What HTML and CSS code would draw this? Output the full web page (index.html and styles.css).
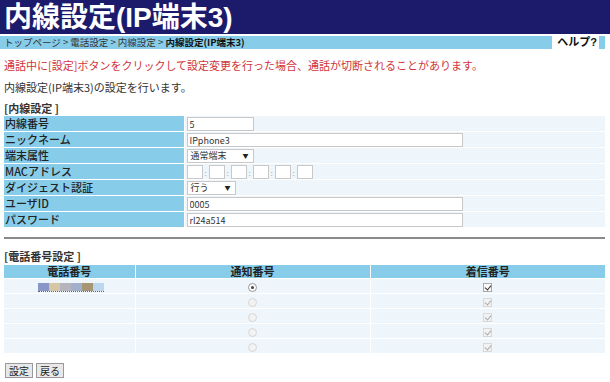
FILE: index.html
```html
<!DOCTYPE html>
<html lang="ja">
<head>
    <meta charset="UTF-8">
    <title>内線設定(IP端末3)</title>
    <link rel="stylesheet" href="styles.css">
</head>
<body>
    <div class="title-bar">
        <h1>内線設定(IP端末3)</h1>
    </div>
    <div class="crumb-bar">
        <div class="crumbs">トップページ &gt; 電話設定 &gt; 内線設定 &gt; <b>内線設定(IP端末3)</b></div>
        <div class="help">ヘルプ?</div>
    </div>

    <div class="main">
        <p class="warn">通話中に[設定]ボタンをクリックして設定変更を行った場合、通話が切断されることがあります。</p>
        <p class="desc">内線設定(IP端末3)の設定を行います。</p>

        <div class="section-title">[内線設定 ]</div>
        <table class="form-table">
            <tr>
                <th>内線番号</th>
                <td><input type="text" class="short" value="5"></td>
            </tr>
            <tr>
                <th>ニックネーム</th>
                <td><input type="text" class="long" value="IPphone3"></td>
            </tr>
            <tr>
                <th>端末属性</th>
                <td><span class="select s-wide">通常端末</span></td>
            </tr>
            <tr>
                <th>MACアドレス</th>
                <td class="mac">
                    <input type="text" class="oct"><span class="colon">:</span><input type="text" class="oct"><span class="colon">:</span><input type="text" class="oct"><span class="colon">:</span><input type="text" class="oct"><span class="colon">:</span><input type="text" class="oct"><span class="colon">:</span><input type="text" class="oct">
                </td>
            </tr>
            <tr>
                <th>ダイジェスト認証</th>
                <td><span class="select s-narrow">行う</span></td>
            </tr>
            <tr>
                <th>ユーザID</th>
                <td><input type="text" class="long" value="0005"></td>
            </tr>
            <tr>
                <th>パスワード</th>
                <td><input type="text" class="long" value="rl24a514"></td>
            </tr>
        </table>

        <hr>

        <div class="section-title">[電話番号設定 ]</div>
        <table class="num-table">
            <tr>
                <th class="c1">電話番号</th>
                <th class="c2">通知番号</th>
                <th class="c3">着信番号</th>
            </tr>
            <tr>
                <td>
                    <span class="mosaic">
                        <i class="m1"></i><i class="m2"></i><i class="m3"></i><i class="m4"></i><i class="m5"></i><i class="m6"></i>
                    </span>
                </td>
                <td><span class="radio on"></span></td>
                <td><span class="check"></span></td>
            </tr>
            <tr>
                <td></td>
                <td><span class="radio off"></span></td>
                <td><span class="check off"></span></td>
            </tr>
            <tr>
                <td></td>
                <td><span class="radio off"></span></td>
                <td><span class="check off"></span></td>
            </tr>
            <tr>
                <td></td>
                <td><span class="radio off"></span></td>
                <td><span class="check off"></span></td>
            </tr>
            <tr>
                <td></td>
                <td><span class="radio off"></span></td>
                <td><span class="check off"></span></td>
            </tr>
        </table>

        <div class="buttons">
            <button>設定</button>
            <button>戻る</button>
        </div>
    </div>
</body>
</html>
```

FILE: styles.css
```css
:root {
    --navy: #1b1a6b;
    --sky: #87cdea;
    --pale: #eef6fc;
}

* {
    box-sizing: border-box;
    margin: 0;
    padding: 0;
}

body {
    font-family: "Noto Sans CJK JP", "DejaVu Sans", sans-serif;
    font-size: 11px;
    line-height: 14px;
    color: #333;
    background: #fff;
}

.title-bar {
    background: var(--navy);
    height: 35px;
    padding: 4px 0 0 4px;
    border-bottom: 1px solid #fff;
}

.title-bar h1 {
    color: #fff;
    font-family: "Liberation Sans", "Noto Sans CJK JP", sans-serif;
    font-size: 28px;
    line-height: 28px;
    font-weight: bold;
}

.crumb-bar {
    display: flex;
    align-items: stretch;
    height: 13px;
    width: 605px;
    background: var(--sky);
    margin-top: 1px;
}

.crumbs {
    flex: 1;
    font-size: 9.5px;
    line-height: 13px;
    padding-left: 4px;
    color: #333;
}

.crumbs b {
    color: #111;
}

.help {
    background: #fff;
    width: 47px;
    margin-right: 6px;
    font-family: "Liberation Sans", "Noto Sans CJK JP", sans-serif;
    font-size: 11px;
    font-weight: bold;
    line-height: 13px;
    text-align: right;
    padding-right: 2px;
    color: #111;
}

.main {
    padding: 0 5px 0 4px;
}

.warn {
    color: #d0343a;
    margin-top: 9px;
}

.desc {
    margin-top: 8px;
}

.section-title {
    font-weight: bold;
    color: #333;
    line-height: 13px;
    margin-top: 8px;
}

table {
    width: 601px;
    border-collapse: collapse;
}

.form-table th,
.form-table td {
    height: 15px;
    border: 1px solid #fff;
    border-left: none;
    padding: 0;
    line-height: 13px;
}

.form-table th {
    background: var(--sky);
    width: 180px;
    text-align: left;
    font-weight: 500;
    padding-left: 1px;
    color: #222;
}

.form-table td {
    background: var(--pale);
    padding-left: 2px;
    border-right: none;
}

input[type=text] {
    font-family: inherit;
    font-size: 9px;
    height: 14px;
    border: 1px solid #c8c8c8;
    background: #fff;
    padding: 0 2px;
    color: #333;
    vertical-align: middle;
}

.short {
    width: 67px;
}

.long {
    width: 276px;
}

.select {
    display: inline-block;
    position: relative;
    height: 14px;
    border: 1px solid #c8c8c8;
    background: #fff;
    font-size: 9px;
    line-height: 12px;
    padding-left: 3px;
    vertical-align: middle;
}

.select::after {
    content: "▼";
    position: absolute;
    right: 4px;
    top: 0;
    font-size: 6px;
    color: #222;
}

.s-wide {
    width: 67px;
}

.s-narrow {
    width: 49px;
}

.mac .oct {
    width: 16px;
}

.colon {
    display: inline-block;
    width: 6px;
    text-align: center;
    color: #aaa;
    font-size: 8px;
    vertical-align: middle;
}

hr {
    border: 0;
    border-top: 2px solid #8a8a8a;
    margin-top: 9px;
    width: 601px;
}

.main hr + .section-title {
    margin-top: 11px;
    margin-bottom: 1px;
}

.num-table th,
.num-table td {
    height: 15px;
    border: 1px solid #fff;
    text-align: center;
    padding: 0;
    line-height: 13px;
}

.num-table th:first-child,
.num-table td:first-child {
    border-left: none;
}

.num-table th:last-child,
.num-table td:last-child {
    border-right: none;
}

.num-table th {
    background: var(--sky);
    font-weight: bold;
    height: 14px;
    color: #222;
}

.num-table td {
    background: var(--pale);
}

.c1 {
    width: 131px;
}

.c2 {
    width: 235px;
}

.mosaic {
    display: inline-flex;
    margin-left: 4px;
    border-bottom: 1px dotted #666;
    vertical-align: middle;
}

.mosaic i {
    display: block;
    width: 11px;
    height: 8px;
}

.m1 { background: #8797c8; }
.m2 { background: #d6c6a6; }
.m3 { background: #b4b4bc; }
.m4 { background: #a2b0cc; }
.m5 { background: #a69676; }
.m6 { background: #bcd6ee; }

.radio {
    display: inline-block;
    width: 9px;
    height: 9px;
    border-radius: 50%;
    border: 1px solid #c4c4c4;
    background: #f4f4f4;
    vertical-align: middle;
    position: relative;
}

.radio.on {
    border-color: #999;
    background: #fafafa;
}

.radio.on::after {
    content: "";
    position: absolute;
    left: 2px;
    top: 2px;
    width: 3px;
    height: 3px;
    border-radius: 50%;
    background: #444;
}

.radio.off {
    border-color: #d6d6d6;
    background: #f2f2f2;
}

.check {
    display: inline-block;
    width: 9px;
    height: 9px;
    border: 1px solid #aaa;
    background: #fafafa;
    vertical-align: middle;
    position: relative;
}

.check::after {
    content: "";
    position: absolute;
    left: 2px;
    top: 0;
    width: 3px;
    height: 5px;
    border: solid #333;
    border-width: 0 1.5px 1.5px 0;
    transform: rotate(40deg);
}

.check.off {
    border-color: #d8d8d8;
    background: #f2f2f2;
}

.check.off::after {
    border-color: #aaa;
}

.buttons {
    margin-top: 9px;
    display: flex;
    gap: 3px;
    padding-left: 1px;
}

button {
    font-family: inherit;
    font-size: 10px;
    height: 15px;
    line-height: 12px;
    padding: 0 3px;
    border: 1px solid #9a9a9a;
    background: #e8e8e8;
    color: #222;
}
```
